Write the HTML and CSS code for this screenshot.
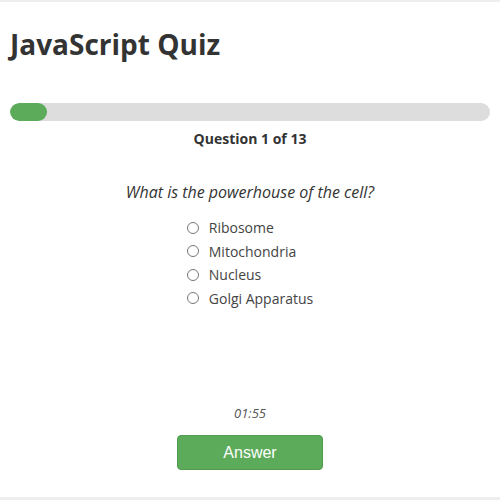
FILE: index.html
```html
<!DOCTYPE html>
<html>
<head>
<meta charset="utf-8">
<link rel="stylesheet" href="styles.css">
</head>
<body>
<div class="page">
  <h1 class="title">JavaScript Quiz</h1>
  <div class="progress"><div class="progress-fill" style="width: 7.7%"></div></div>
  <div class="counter">Question 1 of 13</div>
  <div class="question">What is the powerhouse of the cell?</div>
  <div class="options">
    <label class="option"><span class="radio"></span>Ribosome</label>
    <label class="option"><span class="radio"></span>Mitochondria</label>
    <label class="option"><span class="radio"></span>Nucleus</label>
    <label class="option"><span class="radio"></span>Golgi Apparatus</label>
  </div>
  <div class="spacer"></div>
  <div class="timer">01:55</div>
  <button class="answer">Answer</button>
</div>
</body>
</html>
```
FILE: styles.css
```css
html, body { margin: 0; padding: 0; }
body {
  background: #eeeeee;
  font-family: "Open Sans", "Noto Sans", sans-serif;
  color: #333;
}
.page {
  background: #fff;
  margin-top: 2px;
  height: 495px;
  box-sizing: border-box;
  padding: 0 10px;
  display: flex;
  flex-direction: column;
}
.title {
  margin: 24px 0 0;
  font-size: 28px;
  font-weight: 700;
  line-height: 36px;
  color: #333;
}
.progress {
  margin-top: 41px;
  height: 18px;
  background: #ddd;
  border-radius: 9px;
  overflow: hidden;
}
.progress-fill {
  height: 100%;
  background: #5cab5a;
  border-radius: 9px;
}
.counter {
  text-align: center;
  font-weight: 700;
  font-size: 14px;
  line-height: 20px;
  margin-top: 8px;
}
.question {
  text-align: center;
  font-style: italic;
  font-size: 16px;
  line-height: 22px;
  margin-top: 32px;
}
.options {
  display: flex;
  flex-direction: column;
  align-items: flex-start;
  align-self: center;
  margin-top: 13px;
}
.option {
  display: flex;
  align-items: center;
  font-size: 14px;
  line-height: 23.5px;
  color: #444;
}
.radio {
  width: 10px;
  height: 10px;
  border: 1px solid #777;
  border-radius: 50%;
  margin-right: 10px;
}
.spacer { flex: 1; }
.timer {
  text-align: center;
  font-style: italic;
  font-size: 13px;
  color: #555;
  line-height: 18px;
}
.answer {
  align-self: center;
  margin-top: 13px;
  margin-bottom: 27px;
  width: 146px;
  height: 35px;
  background: #5cab5a;
  color: #fff;
  border: 1px solid #4f9d4d;
  border-radius: 4px;
  font-family: "Liberation Sans", Arial, sans-serif;
  font-size: 16px;
}
```
